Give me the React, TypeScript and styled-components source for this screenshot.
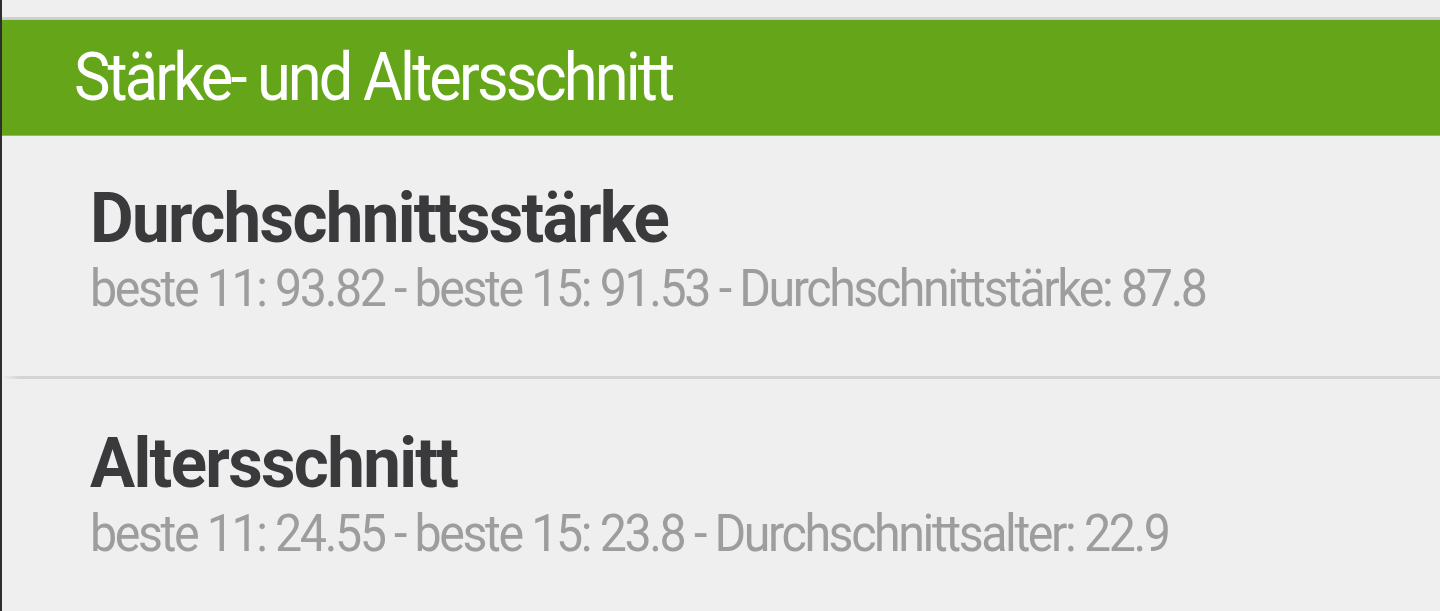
import React from 'react'
import styled, { createGlobalStyle } from 'styled-components'

const GlobalStyle = createGlobalStyle`
  html, body {
    margin: 0;
    padding: 0;
    background: #efefef;
  }
  body {
    font-family: Roboto, "Noto Sans", "Liberation Sans", sans-serif;
    -webkit-font-smoothing: antialiased;
  }
`

const Screen = styled.div`
  width: 1440px;
  height: 611px;
  overflow: hidden;
  background: #efefef;
  border-left: 2px solid #2e2e2e;
  box-sizing: border-box;
  display: flex;
  flex-direction: column;
`

const TopGap = styled.div`
  height: 17px;
  flex: none;
`

const TopRule = styled.div`
  height: 3px;
  flex: none;
  background: linear-gradient(to bottom, #d2d2d2, #c9cbc6);
`

const SectionHeader = styled.header`
  height: 116px;
  flex: none;
  display: flex;
  align-items: center;
  padding-left: 72px;
  background: #64a519;
  border-bottom: 1px solid #93b96a;
  box-sizing: border-box;
`

// the app's text is rendered narrow and tightly tracked
const Squeezed = styled.span<{ $scale: number; $tracking: number }>`
  display: inline-block;
  white-space: nowrap;
  letter-spacing: ${p => p.$tracking}px;
  transform: scaleX(${p => p.$scale});
  transform-origin: left center;
`

const HeaderTitle = styled.h1`
  margin: 0;
  font-size: 66px;
  line-height: 1;
  font-weight: 400;
  color: #ffffff;
`

const Item = styled.section<{ $top: number; $bottom: number }>`
  display: flex;
  flex-direction: column;
  gap: 10px;
  padding: ${p => p.$top}px 0 ${p => p.$bottom}px 88px;
  flex: none;
`

const ItemTitle = styled.h2`
  margin: 0;
  font-size: 70px;
  line-height: 1;
  font-weight: 700;
  color: #3a3a3c;
`

const ItemText = styled.p`
  margin: 0;
  font-size: 52px;
  line-height: 1;
  font-weight: 400;
  color: #9d9d9d;
`

const Separator = styled.div`
  height: 3px;
  flex: none;
  background: linear-gradient(to right, rgba(214, 214, 214, 0) 0, #d4d4d4 18px, #d4d4d4 100%);
`

const rows = [
  {
    title: 'Durchschnittsstärke',
    text: 'beste 11: 93.82 - beste 15: 91.53 - Durchschnittstärke: 87.8',
  },
  {
    title: 'Altersschnitt',
    text: 'beste 11: 24.55 - beste 15: 23.8 - Durchschnittsalter: 22.9',
  },
]

export default function App() {
  return (
    <>
      <GlobalStyle />
      <Screen>
        <TopGap />
        <TopRule />
        <SectionHeader>
          <HeaderTitle>
            <Squeezed $scale={0.93} $tracking={-3.1}>Stärke- und Altersschnitt</Squeezed>
          </HeaderTitle>
        </SectionHeader>
        {rows.map((row, i) => (
          <React.Fragment key={row.title}>
            {i > 0 && <Separator />}
            <Item $top={i === 0 ? 47 : 49} $bottom={i === 0 ? 61 : 40}>
              <ItemTitle>
                <Squeezed $scale={0.96} $tracking={-1.75}>{row.title}</Squeezed>
              </ItemTitle>
              <ItemText>
                <Squeezed $scale={0.93} $tracking={-2.6}>{row.text}</Squeezed>
              </ItemText>
            </Item>
          </React.Fragment>
        ))}
      </Screen>
    </>
  )
}
